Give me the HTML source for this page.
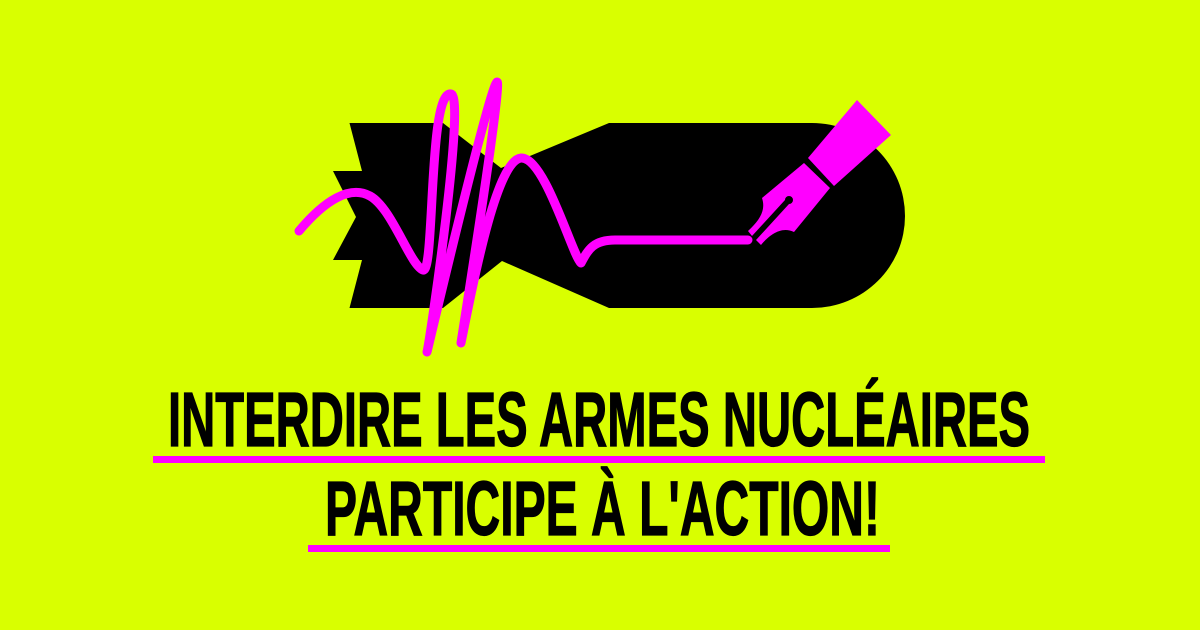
<!DOCTYPE html>
<html><head><style>
html,body{margin:0;padding:0;background:#d9ff00;}
svg{display:block}
</style></head><body>
<svg width="1200" height="630" viewBox="0 0 1200 630" xmlns="http://www.w3.org/2000/svg">
<rect width="1200" height="630" fill="#d9ff00"/>
<path d="M349.5,123 L443,123 L501,168 L609,123 L812,123 A93,93 0 0 1 905,216 A93,92 0 0 1 812,308 L609,308 L502,261 L443,308 L349.5,308 L362,260 L333,260 L356,217 L333,171 L362,171 Z" fill="#000"/>
<path d="M299,231 C325,200 350,185 370,196 C392,208 410,265 423,270 C435,275 428,90 451,94 C466,96 430,340 427,352 C430,340 490,85 497,82 C503,80 462,335 461,343 C470,300 495,160 521,158 C545,157 572,255 581,263 C588,250 593,240 615,240 L748,240" fill="none" stroke="#ff00ff" stroke-width="9" stroke-linecap="round" stroke-linejoin="round"/>
<polygon points="808,158 857,100 891,135 834,186" fill="#ff00ff"/>
<path d="M804,163 L830,188 L794,232 C782,226 770,234 761,245 L756,240 L789,204 A4,4 0 1 0 785,200 L752,236 L748,231 C760,220 766,210 762,198 Z" fill="#ff00ff"/>
<g font-family="'Liberation Sans Narrow','Liberation Sans',sans-serif" font-weight="bold" font-size="77" fill="#000" stroke="#000" stroke-width="1.2">
<text x="168" y="446" textLength="862" lengthAdjust="spacingAndGlyphs">INTERDIRE LES ARMES NUCLÉAIRES</text>
<text x="325" y="535" textLength="555" lengthAdjust="spacingAndGlyphs">PARTICIPE À L'ACTION!</text>
</g>
<rect x="153" y="456" width="892" height="7" fill="#ff00ff"/>
<rect x="308" y="545" width="582" height="7" fill="#ff00ff"/>
</svg>
</body></html>
